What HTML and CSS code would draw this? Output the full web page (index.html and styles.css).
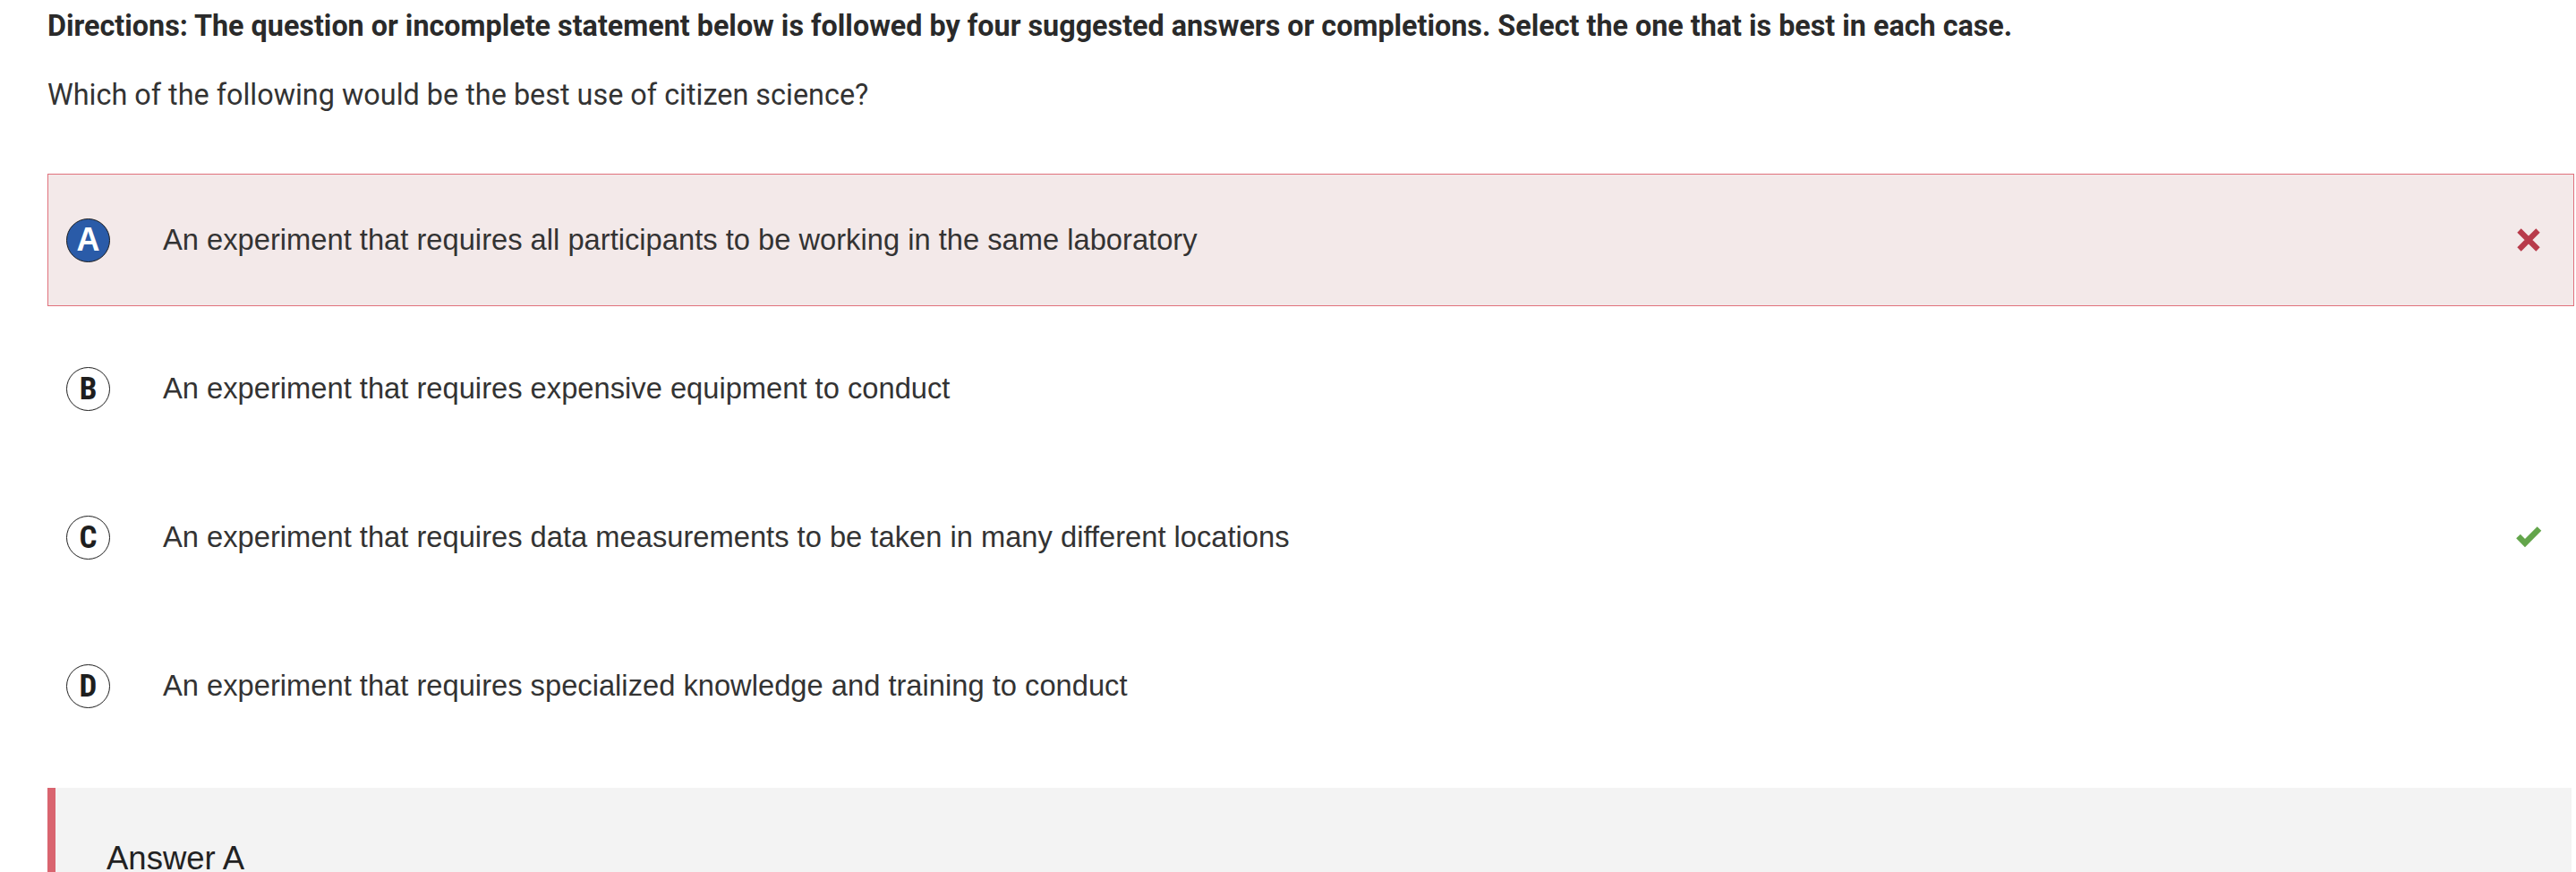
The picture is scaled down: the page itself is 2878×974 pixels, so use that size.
FILE: index.html
```html
<!DOCTYPE html>
<html lang="en">
<head>
<meta charset="utf-8">
<title>Citizen science question</title>
<link rel="stylesheet" href="styles.css">
</head>
<body>
<main class="quiz">
  <p class="directions">Directions: The question or incomplete statement below is followed by four suggested answers or completions. Select the one that is best in each case.</p>
  <p class="stem">Which of the following would be the best use of citizen science?</p>
  <ul class="choices">
    <li class="choice choice--wrong">
      <span class="letter letter--selected">A</span>
      <span class="choice-text">An experiment that requires all participants to be working in the same laboratory</span>
      <span class="mark">
        <svg class="icon-times" viewBox="0 0 26 26" aria-hidden="true"><path d="M2.5 2.5L23.5 23.5M23.5 2.5L2.5 23.5"/></svg>
      </span>
    </li>
    <li class="choice">
      <span class="letter">B</span>
      <span class="choice-text">An experiment that requires expensive equipment to conduct</span>
      <span class="mark"></span>
    </li>
    <li class="choice">
      <span class="letter">C</span>
      <span class="choice-text">An experiment that requires data measurements to be taken in many different locations</span>
      <span class="mark">
        <svg class="icon-check" viewBox="0 0 29 24" aria-hidden="true"><path d="M2.5 11L10 18.5L26 2.5"/></svg>
      </span>
    </li>
    <li class="choice">
      <span class="letter">D</span>
      <span class="choice-text">An experiment that requires specialized knowledge and training to conduct</span>
      <span class="mark"></span>
    </li>
  </ul>
  <section class="answer">
    <h2 class="answer-title">Answer A</h2>
  </section>
</main>
</body>
</html>
```

FILE: styles.css
```css
html, body {
  margin: 0;
  padding: 0;
  background: #ffffff;
  height: 100%;
  overflow: hidden;
}

.quiz {
  padding: 11px 2px 0 53px;
  font-family: Roboto, "Liberation Sans", sans-serif;
  color: #333333;
}

.directions {
  margin: 0;
  font-family: Roboto, sans-serif;
  font-weight: 700;
  font-size: 32.3px;
  line-height: 36px;
  color: #2a2a2a;
}

.stem {
  margin: 41px 0 0;
  font-family: Roboto, sans-serif;
  font-weight: 400;
  font-size: 32.4px;
  line-height: 36px;
  color: #333333;
}

.choices {
  list-style: none;
  margin: 70px 0 0;
  padding: 0;
  display: flex;
  flex-direction: column;
  gap: 18px;
}

.choice {
  box-sizing: border-box;
  height: 148px;
  display: flex;
  align-items: center;
  padding: 0 35px 0 20px;
  border: 1px solid transparent;
}

.choice--wrong {
  background: #f3e9e9;
  border-color: #e0717c;
}

.letter {
  box-sizing: border-box;
  flex: none;
  width: 49px;
  height: 49px;
  border: 1.5px solid #1e1e1e;
  border-radius: 50%;
  background: #ffffff;
  display: flex;
  align-items: center;
  justify-content: center;
  font-family: "Liberation Sans Narrow", "Roboto Condensed", Roboto, sans-serif;
  font-weight: 700;
  font-size: 35px;
  line-height: 1;
  color: #1e1e1e;
}

.letter--selected {
  background: #2a5ba8;
  color: #ffffff;
  font-family: "Liberation Sans", Arial, sans-serif;
  font-size: 36px;
}

.choice-text {
  flex: 1;
  margin-left: 59px;
  font-family: "Liberation Sans", Arial, sans-serif;
  font-size: 32.7px;
  line-height: 1.15;
  color: #333333;
}

.mark {
  flex: none;
  width: 30px;
  display: flex;
  justify-content: center;
  align-items: center;
}

.icon-times {
  width: 26px;
  height: 26px;
  fill: none;
  stroke: #b83b4b;
  stroke-width: 6.2;
}

.icon-check {
  width: 29px;
  height: 24px;
  fill: none;
  stroke: #63a54b;
  stroke-width: 6.6;
  stroke-linejoin: miter;
}

.answer {
  margin: 40px 3px 0 0;
  padding: 58px 0 0 57px;
  background: #f3f3f3;
  border-left: 9px solid #d9646f;
}

.answer-title {
  margin: 0;
  font-family: "Liberation Sans", Arial, sans-serif;
  font-weight: 400;
  font-size: 36.5px;
  line-height: 42px;
  color: #222222;
}
```
